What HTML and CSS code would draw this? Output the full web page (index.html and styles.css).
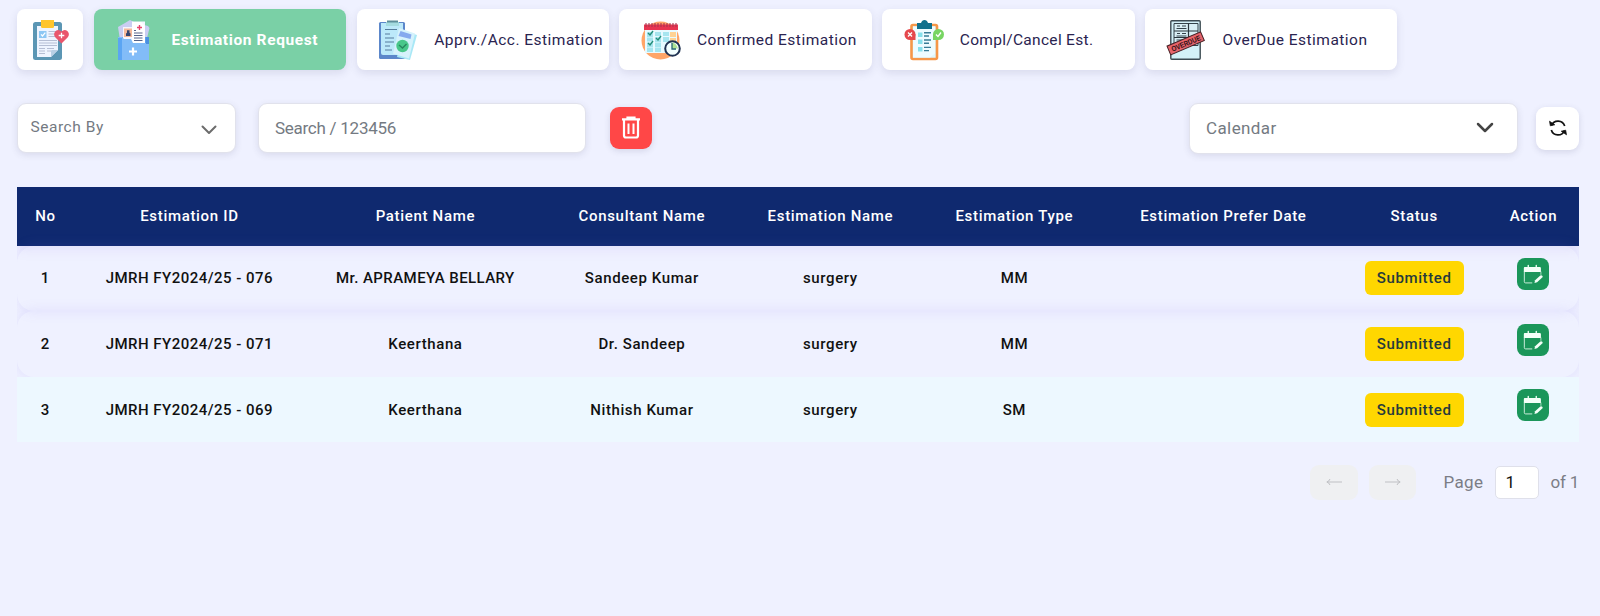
FILE: index.html
```html
<!DOCTYPE html>
<html lang="en">
<head>
<meta charset="utf-8">
<title>Estimation Request</title>
<link rel="stylesheet" href="styles.css">
</head>
<body>
<svg width="0" height="0" class="defs" aria-hidden="true">
  <symbol id="edit" viewBox="0 0 24 24">
    <path d="M2 3.500h3.500V1.600q0-.8.8-.8t.8.800V3.500h8V1.600q0-.8.8-.8t.8.800V3.500h3.500q1.300 0 1.300 1.500v4.500H1V5q0-1.500 1-1.500z" fill="#f4fff8"/>
    <path d="M1.600 9v12.200q0 1.500 1.500 1.500h8" fill="none" stroke="#d9f3e4" stroke-width="1.100"/>
    <path d="M21.500 9v4" stroke="#d9f3e4" stroke-width=".9"/>
    <path d="M13.800 22.800l.7-3.300 6.300-5.700q1.200-.9 2.300.2 1 1.200 0 2.200l-6.200 5.800z" fill="#f4fff8"/>
  </symbol>
</svg>

<nav class="tabs">
  <div class="tab tab-home">
    <svg class="icon" viewBox="0 0 40 40">
      <rect x="3" y="2" width="29" height="38" rx="2.500" fill="#5b96b4"/>
      <path d="M7 6h21v24l-7 7H7z" fill="#eef4ff"/>
      <path d="M28 30l-7 7v-6q0-1 1-1z" fill="#b9d0e5"/>
      <rect x="9" y="11" width="7.500" height="7" fill="#8dc7f4"/>
      <path d="M11 14.300l1.500 1.700 2.800-3.300" fill="none" stroke="#fff" stroke-width="1.200"/>
      <path d="M18.500 11.500H27M18.500 14H27M18.500 16.500H27M9 20.500h18M9 23h18M9 25.500h18M9 28.500h6M17 28.500h7M9 31h6M17 31h4M9 33.500h6" stroke="#aeb8cf" stroke-width=".9"/>
      <path d="M11 0h13v6.500q0 1.500-1.500 1.500h-10Q11 8 11 6.500z" fill="#fec52e"/>
      <path d="M31.500 23.500l-6.300-6.300q-2.300-3.300.2-6 3.300-2.500 6.100.4 2.800-2.900 6.100-.4 2.500 2.700.2 6z" fill="#e9566c"/>
      <path d="M31.500 12.800v5.500M28.700 15.500h5.600" stroke="#fff" stroke-width="1.300"/>
    </svg>
  </div>
  <div class="tab active">
    <svg class="icon" viewBox="0 0 40 40">
      <path d="M3 7l7-4 5-3 6 3 12 3 1.500 2-3 12H5z" fill="#c9cdf2"/>
      <path d="M3 17h31v23H3z" fill="#5a9fee"/>
      <path d="M8 7h9V1.500h13V22H8z" fill="#f4f5ff"/>
      <path d="M17 2h9l4 4v17H17z" fill="#fff"/>
      <rect x="9" y="8.500" width="8" height="8.500" fill="#f6b99b"/>
      <path d="M11 16v-2.500l1-.7v-2.500h2.500v2.500l1 .7V16z" fill="#36456f"/>
      <path d="M24.500 5v5M22 7.500h5" stroke="#e8446e" stroke-width="1.400"/>
      <path d="M19 10.500h2M19 13h8.500M19 15.500h8.500M19 18h8.500M19 20.500h8.500" stroke="#43517c" stroke-width=".9"/>
      <path d="M3 17h4l2 2h7l2 4h16v17H3z" fill="#82bcf8"/>
      <path d="M3 18h4v22H3z" fill="#5ba5f3"/>
      <path d="M31 17h3v7h-3z" fill="#4b90e0"/>
      <path d="M18 27.500v8M14 31.500h8" stroke="#fff" stroke-width="2.200"/>
    </svg>
    <span>Estimation Request</span>
  </div>
  <div class="tab">
    <svg class="icon" viewBox="0 0 40 40">
      <rect x="1" y="2" width="26" height="37" rx="1.500" fill="#5c87ca"/>
      <path d="M3 3h22v32H5q-2 0-2-2z" fill="#bce9fa"/>
      <path d="M8 2h13v4H8z" fill="#a4dbe0"/><path d="M9 .5h11v2H9z" fill="#5d8e9b"/>
      <path d="M7 9.500h12M7 14h5M7 18h9M7 22h9M7 26h5M7 30h7" stroke="#567d9d" stroke-width="1.100"/>
      <path d="M24 10l15 5-7 25-13-3z" fill="#a9e8f6"/>
      <path d="M21 8l16 5.500-6 25-16-5z" fill="#d6f2fc"/>
      <path d="M22.500 11l11 3.500-1 4.500-12-3z" fill="#86a9ee"/>
      <circle cx="24.500" cy="26" r="6.200" fill="#48c78a"/>
      <path d="M21 25l3.500 3 4-4" fill="none" stroke="#26855e" stroke-width="1.400"/>
    </svg>
    <span>Apprv./Acc. Estimation</span>
  </div>
  <div class="tab">
    <svg class="icon" viewBox="0 0 40 40">
      <circle cx="19.500" cy="20.500" r="19" fill="#ffa568"/>
      <path d="M4 6h32v27H4z" fill="#e7faff"/>
      <path d="M3 4.500h34V10H3z" fill="#e83551"/>
      <path d="M5 3v4M8 3v4M11 3v4M14 3v4M17 3v4M20 3v4M23 3v4M26 3v4M29 3v4M32 3v4M35 3v4" stroke="#a93750" stroke-width="1.100"/>
      <path d="M6 12h6v5H6zM14 12h6v4h-6zM6 17.500h6v4H6zM14 17h6v5h-6zM22 17h6v5h-6zM6 22.500h6v5H6zM14 22.500h6v5h-6zM6 28h6v4H6zM14 28h6v4h-6zM22 12h6v4h-6z" fill="#a6e5ef"/>
      <path d="M29 12h6v5h-6zM29 18h6v4h-6z" fill="#ffd292"/>
      <path d="M7 13l2 2 3-4M15 18l2 2 3-4M7 23l2 2 3-4" fill="none" stroke="#238d79" stroke-width="1.400"/>
      <circle cx="31.500" cy="28.500" r="7.300" fill="#f3ffff" stroke="#213352" stroke-width="2"/>
      <path d="M31 28.500v-6q4 0 6 6z" fill="#aee294"/>
      <path d="M31 23v6h4" fill="none" stroke="#256472" stroke-width="1.300"/>
    </svg>
    <span>Confirmed Estimation</span>
  </div>
  <div class="tab">
    <svg class="icon" viewBox="0 0 40 40">
      <rect x="7.500" y="5" width="25.500" height="34" rx="1.500" fill="#dff7fb" stroke="#f69748" stroke-width="2.600"/>
      <path d="M9 6.500h22v27l-5 4H9z" fill="#eefcff"/>
      <path d="M13 3h4q1-3 3.500-3T24 3h4v6H13z" fill="#11708c"/>
      <path d="M14 12.500h4.500v4.500H14zM14 19.500h4.500V24H14zM14 27h4.500v4.500H14z" fill="#86e0eb"/>
      <path d="M20 12.800h7M20 16h5M20 20h7M20 23.200h5M20 27.400h7M20 30.600h5" stroke="#397d97" stroke-width="1.400"/>
      <circle cx="6" cy="14.500" r="5.500" fill="#e5484d"/><path d="M6 20h5.500v-6z" fill="#e5484d"/>
      <path d="M4 12.500l4 4M8 12.500l-4 4" stroke="#fff" stroke-width="1.300"/>
      <circle cx="34.500" cy="14.500" r="5.500" fill="#77d562"/><path d="M34.500 20H29v-6z" fill="#77d562"/>
      <path d="M32 14.500l2 2 3-4" fill="none" stroke="#fff" stroke-width="1.300"/>
    </svg>
    <span class="short">Compl/Cancel Est.</span>
  </div>
  <div class="tab">
    <svg class="icon" viewBox="0 0 40 40">
      <rect x="3.800" y=".8" width="29.400" height="38.400" rx="1" fill="#d3f1f8" stroke="#3c4b52" stroke-width="1.400"/>
      <path d="M7 3.500h24v22H7z" fill="#d8eff5" stroke="#33424a" stroke-width="1"/>
      <path d="M21.500 3.500v22M7 11h24M7 17.500h24" stroke="#28363d" stroke-width="1.200"/>
      <path d="M10 6h3M15 6h4M9.500 8.500h10M10 13.500h3M15 13.500h4M9.500 16h10M9.500 20h8" stroke="#33424a" stroke-width="1"/>
      <g transform="rotate(-23 19 23.500)">
        <rect x=".5" y="18.500" width="36.500" height="9.500" fill="#e6646b" stroke="#462025" stroke-width="1"/>
        <text x="3.500" y="26" textLength="31" lengthAdjust="spacingAndGlyphs" class="stamp">OVERDUE</text>
      </g>
    </svg>
    <span>OverDue Estimation</span>
  </div>
</nav>

<section class="filters">
  <div class="field search-by"><span>Search By</span>
    <svg width="16" height="10" viewBox="0 0 16 10"><path d="M1.500 1.500L8 8l6.500-6.500" fill="none" stroke="#6c6c6c" stroke-width="2" stroke-linecap="round" stroke-linejoin="round"/></svg>
  </div>
  <div class="field search"><span>Search / 123456</span></div>
  <button class="square trash" aria-label="Delete">
    <svg width="20" height="24" viewBox="0 0 20 24"><path d="M1 3.300h18M6.500 2.500V1.500h7v1M3 4v15.500q0 2 2 2h10q2 0 2-2V4" fill="none" stroke="#fff" stroke-width="2.200"/><path d="M7.500 7.500v10.500M12.500 7.500v10.500" stroke="#fff" stroke-width="2"/></svg>
  </button>
  <div class="field calendar"><span>Calendar</span>
    <svg width="18" height="12" viewBox="0 0 18 12"><path d="M2 2l7 7 7-7" fill="none" stroke="#444" stroke-width="2.500" stroke-linecap="round" stroke-linejoin="round"/></svg>
  </div>
  <button class="square refresh" aria-label="Refresh">
    <svg width="18" height="18" viewBox="0 0 18 18" fill="none" stroke="#111" stroke-width="1.700"><path d="M2.500 6.500A7 7 0 0 1 15.700 7M15.500 11.500A7 7 0 0 1 2.300 11"/><path d="M.5 2.200l.8 4.600 4.500-1zM17.500 15.800l-.8-4.600-4.500 1z" fill="#111" stroke-width=".7"/></svg>
  </button>
</section>

<main class="table">
  <div class="row head"><span>No</span><span>Estimation ID</span><span>Patient Name</span><span>Consultant Name</span><span>Estimation Name</span><span>Estimation Type</span><span>Estimation Prefer Date</span><span>Status</span><span>Action</span></div>
  <div class="row"><span>1</span><span class="id">JMRH FY2024/25 - 076</span><span class="caps">Mr. APRAMEYA BELLARY</span><span>Sandeep Kumar</span><span>surgery</span><span>MM</span><span></span><span><b class="badge">Submitted</b></span><span><i class="edit"><svg width="20" height="20"><use href="#edit"/></svg></i></span></div>
  <div class="row"><span>2</span><span class="id">JMRH FY2024/25 - 071</span><span>Keerthana</span><span>Dr. Sandeep</span><span>surgery</span><span>MM</span><span></span><span><b class="badge">Submitted</b></span><span><i class="edit"><svg width="20" height="20"><use href="#edit"/></svg></i></span></div>
  <div class="row hover"><span>3</span><span class="id">JMRH FY2024/25 - 069</span><span>Keerthana</span><span>Nithish Kumar</span><span>surgery</span><span>SM</span><span></span><span><b class="badge">Submitted</b></span><span><i class="edit"><svg width="20" height="20"><use href="#edit"/></svg></i></span></div>
</main>

<footer class="pager">
  <button class="page-btn" disabled aria-label="Previous page">
    <svg width="16" height="8" viewBox="0 0 16 8"><path d="M16 4H1M4 1Q3 3.500.800 4 3 4.500 4 7" fill="none" stroke="#bfc0c4" stroke-width="1"/></svg>
  </button>
  <button class="page-btn" disabled aria-label="Next page">
    <svg width="16" height="8" viewBox="0 0 16 8"><path d="M0 4h15M12 1q1 2.500 3.200 3Q13 4.500 12 7" fill="none" stroke="#bfc0c4" stroke-width="1"/></svg>
  </button>
  <span class="page-label">Page</span>
  <span class="page-input">1</span>
  <span class="page-total">of 1</span>
</footer>
</body>
</html>
```
FILE: styles.css
```css
* { box-sizing: border-box; }
body {
  margin: 0;
  padding: 9px 21px 0 17.400px;
  height: 616px;
  overflow: hidden;
  background: #eff1ff;
  font: 500 15px/20px Roboto, "Noto Sans", sans-serif;
  letter-spacing: .6px;
  color: #111;
}
button { border: 0; padding: 0; font: inherit; }
svg { display: block; flex: none; }
.defs { position: absolute; }

.tabs { display: flex; gap: 10.500px; }
.tab {
  display: flex;
  align-items: center;
  width: 252.300px;
  height: 61px;
  padding-left: 21.500px;
  border-radius: 8px;
  background: #fff;
  box-shadow: 0 3px 8px rgba(60, 60, 110, .13);
  color: #2a2450;
  font-size: 15.500px;
  font-weight: 400;
  letter-spacing: .48px;
  white-space: nowrap;
}
.tab .icon { width: 40px; height: 40px; margin-right: 16px; overflow: visible; }
.tab-home { width: 66px; padding-left: 13px; }
.tab.active { background: #7ad0a6; color: #fff; font-weight: 700; letter-spacing: .62px; }
.short { letter-spacing: .3px; }
.stamp { font: 700 7.500px "Liberation Sans", sans-serif; letter-spacing: 0; fill: #301014; }

.filters { display: flex; align-items: center; margin-top: 32.500px; height: 51px; }
.field {
  display: flex;
  align-items: center;
  justify-content: space-between;
  height: 50px;
  border: 1px solid #e1e2ec;
  border-radius: 9px;
  background: #fff;
  box-shadow: 0 2px 7px rgba(60, 60, 100, .12);
  color: #747a82;
  font-size: 17px;
  font-weight: 400;
  letter-spacing: .4px;
}
.search-by { width: 219px; padding: 0 18px 0 12px; font-size: 15.500px; letter-spacing: .55px; }
.search-by span { margin-top: -2px; }
.search-by svg { margin-top: 3px; }
.search { width: 328px; margin-left: 22px; padding-left: 15.500px; letter-spacing: -.25px; }
.calendar { width: 329px; height: 51px; margin-left: auto; padding: 0 23px 0 16px; }
.square {
  display: flex;
  align-items: center;
  justify-content: center;
  width: 42px;
  height: 42px;
  border-radius: 9px;
  box-shadow: 0 2px 6px rgba(60, 60, 100, .15);
}
.trash { margin-left: 23.500px; background: #ff4747; }
.refresh { width: 43px; height: 43px; margin-left: 18px; background: #fff; }

.table { margin-top: 33px; overflow: hidden; }
.row {
  display: grid;
  grid-template-columns: 56px 232px 240px 193px 184px 184px 234px 147.500px 1fr;
  align-items: center;
  justify-items: center;
  height: 65.600px;
  border-radius: 17px;
  box-shadow: 0 0 14px rgba(130, 110, 230, .13);
}
.id { letter-spacing: .48px; }
.caps { letter-spacing: .42px; }
.head {
  height: 59.500px;
  margin-bottom: -.4px;
  border-radius: 0;
  background: #0f296f;
  box-shadow: 0 0 14px rgba(130, 90, 220, .17);
  color: #fff;
  letter-spacing: .68px;
}
.head span { margin-top: -1px; }
.hover { position: relative; border-radius: 0; background: #edf8ff; box-shadow: none; }
.badge {
  display: block;
  width: 99px;
  height: 34px;
  border-radius: 6px;
  background: #ffd700;
  color: #263a3c;
  font-weight: 500;
  line-height: 34px;
  text-align: center;
}
.edit {
  display: flex;
  align-items: center;
  justify-content: center;
  width: 32px;
  height: 32px;
  margin: 0 1px 9px 0;
  border-radius: 8px;
  background: #1b965a;
}

.pager {
  display: flex;
  align-items: center;
  justify-content: flex-end;
  height: 36px;
  margin-top: 22px;
  color: #7b7d86;
  font-size: 17px;
  font-weight: 400;
  letter-spacing: .4px;
}
.page-btn {
  display: flex;
  align-items: center;
  justify-content: center;
  width: 47.500px;
  height: 35px;
  margin-right: 11px;
  border-radius: 9px;
  background: #eff0f2;
}
.page-label { margin-left: 16px; }
.page-input {
  width: 44px;
  height: 33px;
  margin: 0 11px 0 12px;
  padding-left: 9px;
  border: 1px solid #dfe0ea;
  border-radius: 5px;
  background: #fff;
  color: #111;
  line-height: 31px;
}
.page-total { letter-spacing: -.2px; }
```
